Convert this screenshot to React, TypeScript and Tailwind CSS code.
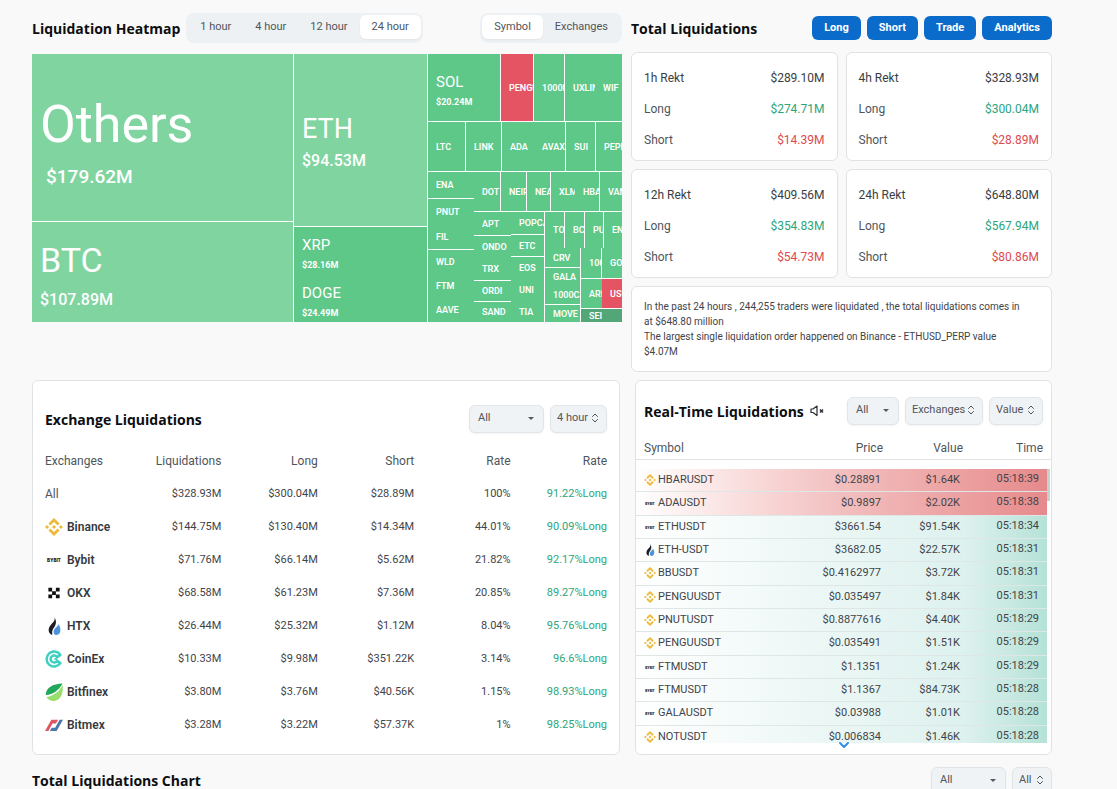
import React from "react";
import { ChevronDown, ChevronsUpDown } from "lucide-react";

type Tone = "light" | "green" | "red" | "dark";

interface Cell {
  size: number;
  label?: string;
  value?: string;
  tone?: Tone;
  text?: string;
  // no dividing line after this cell
  open?: boolean;
  dir?: "row" | "col";
  items?: Cell[];
}

const tones: Record<Tone, string> = {
  light: "bg-[#80d4a0]",
  green: "bg-[#5dc887]",
  red: "bg-[#e45463]",
  dark: "bg-[#53a678]",
};

const cell = (label: string, size: number, open = false, tone: Tone = "green"): Cell => ({
  label,
  size,
  open,
  tone,
});

const heatmap: Cell = {
  size: 1,
  dir: "row",
  items: [
    {
      size: 262,
      dir: "col",
      items: [
        { label: "Others", value: "$179.62M", size: 168, tone: "light", text: "others" },
        { label: "BTC", value: "$107.89M", size: 100, tone: "light", text: "btc" },
      ],
    },
    {
      size: 134,
      dir: "col",
      items: [
        { label: "ETH", value: "$94.53M", size: 173, tone: "light", text: "eth" },
        { label: "XRP", value: "$28.16M", size: 48, open: true, text: "mid" },
        { label: "DOGE", value: "$24.49M", size: 47, text: "mid" },
      ],
    },
    {
      size: 194,
      dir: "col",
      items: [
        {
          size: 68,
          dir: "row",
          items: [
            { label: "SOL", value: "$20.24M", size: 73, text: "mid" },
            cell("PENGU", 33, false, "red"),
            cell("1000PEPE", 31),
            cell("UXLINK", 30, true),
            cell("WIF", 27),
          ],
        },
        {
          size: 50,
          dir: "row",
          items: [
            cell("LTC", 38),
            cell("LINK", 36),
            cell("ADA", 32, true),
            cell("AVAX", 32),
            cell("SUI", 30),
            cell("PEPE", 26),
          ],
        },
        {
          size: 150,
          dir: "row",
          items: [
            {
              size: 46,
              dir: "col",
              open: true,
              items: [
                cell("ENA", 27),
                cell("PNUT", 26, true),
                cell("FIL", 26),
                cell("WLD", 24, true),
                cell("FTM", 24, true),
                cell("AAVE", 24),
              ],
            },
            {
              size: 148,
              dir: "col",
              items: [
                {
                  size: 40,
                  dir: "row",
                  items: [
                    cell("DOT", 27),
                    cell("NEIRO", 26),
                    cell("NEAR", 24),
                    cell("XLM", 24, true),
                    cell("HBAR", 25),
                    cell("VANA", 22),
                  ],
                },
                {
                  size: 110,
                  dir: "row",
                  items: [
                    {
                      size: 37,
                      dir: "col",
                      open: true,
                      items: [
                        cell("APT", 24),
                        cell("ONDO", 22, true),
                        cell("TRX", 23),
                        cell("ORDI", 21),
                        cell("SAND", 20),
                      ],
                    },
                    {
                      size: 34,
                      dir: "col",
                      items: [
                        cell("POPCAT", 23),
                        cell("ETC", 22),
                        cell("EOS", 22, true),
                        cell("UNI", 22, true),
                        cell("TIA", 21),
                      ],
                    },
                    {
                      size: 77,
                      dir: "col",
                      items: [
                        {
                          size: 36,
                          dir: "row",
                          open: true,
                          items: [
                            cell("TON", 20),
                            cell("BCH", 20),
                            cell("PUFF", 19),
                            cell("ENS", 18),
                          ],
                        },
                        {
                          size: 74,
                          dir: "row",
                          items: [
                            {
                              size: 36,
                              dir: "col",
                              items: [
                                cell("CRV", 20),
                                cell("GALA", 18, true),
                                cell("1000CAT", 19),
                                cell("MOVE", 17),
                              ],
                            },
                            {
                              size: 41,
                              dir: "col",
                              items: [
                                {
                                  size: 31,
                                  dir: "row",
                                  items: [cell("1000X", 21), cell("GOAT", 20)],
                                },
                                {
                                  size: 30,
                                  dir: "row",
                                  items: [
                                    cell("ARB", 21, true),
                                    cell("USUAL", 20, false, "red"),
                                  ],
                                },
                                cell("SEI", 13, false, "dark"),
                              ],
                            },
                          ],
                        },
                      ],
                    },
                  ],
                },
              ],
            },
          ],
        },
      ],
    },
  ],
};

const labelText: Record<string, string> = {
  others: "text-[52px] leading-[60px] pt-2",
  btc: "text-[34px] leading-[44px] pt-1",
  eth: "text-[27px] leading-[36px] pt-0.5",
  mid: "text-[15px] leading-[20px] pt-1",
  small: "text-[9px] leading-[12px] font-semibold",
};

const valueText: Record<string, string> = {
  others: "text-[19px] leading-[24px] font-medium mt-2.5 ml-1.5",
  btc: "text-[16px] leading-[20px] font-medium mt-2",
  eth: "text-[16px] leading-[20px] font-medium mt-1",
  mid: "text-[9px] leading-[12px] font-bold mt-1",
  small: "",
};

const TreeCell = ({ node, line = "" }: { node: Cell; line?: string }) => {
  // the dividing line takes one pixel of the cell's own share
  const style = { flexGrow: line ? node.size - 1 : node.size };
  if (node.items) {
    const isRow = node.dir === "row";
    return (
      <div
        style={style}
        className={`flex min-h-0 min-w-0 basis-0 ${isRow ? "flex-row" : "flex-col"} ${line}`}
      >
        {node.items.map((item, i) => {
          const last = i === node.items!.length - 1;
          const border = isRow ? "border-r border-white" : "border-b border-white";
          return <TreeCell key={i} node={item} line={last || item.open ? "" : border} />;
        })}
      </div>
    );
  }
  const text = node.text ?? "small";
  return (
    <div
      style={style}
      className={`flex min-h-0 min-w-0 basis-0 flex-col justify-center overflow-hidden whitespace-nowrap text-white ${tones[node.tone ?? "green"]} ${line}`}
    >
      <span className={`pl-2 ${labelText[text]}`}>{node.label}</span>
      {node.value && <span className={`pl-2 ${valueText[text]}`}>{node.value}</span>}
    </div>
  );
};

const BinanceLogo = ({ className }: { className: string }) => (
  <svg viewBox="0 0 24 24" className={className} fill="#ecbb3c" aria-hidden="true">
    <path d="M7.3 9.9 12 5.2l4.7 4.7 2.8-2.7L12 0 4.6 7.2zM0 12l2.7-2.7L5.5 12l-2.8 2.7zM7.3 14.1 12 18.8l4.7-4.7 2.8 2.7L12 24l-7.400-7.200zM18.500 12l2.800-2.700L24 12l-2.700 2.700zM14.800 12 12 9.200 9.200 12l2.800 2.800z" />
  </svg>
);

const BybitLogo = ({ className }: { className: string }) => (
  <svg viewBox="0 0 24 24" className={className} aria-hidden="true">
    <text x="12" y="15" textAnchor="middle" fontSize="6" fontWeight="900" fill="#26282c" fontFamily="Inter, sans-serif">
      BYBIT
    </text>
  </svg>
);

const OkxLogo = ({ className }: { className: string }) => (
  <svg viewBox="0 0 24 24" className={className} fill="#111" aria-hidden="true">
    <path d="M4.500 5h5v5h-5zM14.500 5h5v5h-5zM9.500 9.500h5v5h-5zM4.500 14h5v5h-5zM14.500 14h5v5h-5z" />
  </svg>
);

const HtxLogo = ({ className }: { className: string }) => (
  <svg viewBox="0 0 24 24" className={className} aria-hidden="true">
    <path d="M12.500 0c1.500 4-1 6.500-4 9.500C4.500 13.500 2.500 20.500 9.500 24c1-2-1-4 1-7.500 2-3.500 7-8 2-16.500z" fill="#1c2026" />
    <path d="M18 9.500c-.5 3-6.500 5.500-6.500 10 0 2.500 1.500 4.500 3.500 4.500 4 0 6-4 5.500-8-.3-2.500-1.300-5-2.500-6.500z" fill="#4b93dd" />
  </svg>
);

const CoinExLogo = ({ className }: { className: string }) => (
  <svg viewBox="0 0 24 24" className={className} fill="none" stroke="#3fd0c2" aria-hidden="true">
    <path
      d="M20.500 6.500A10 10 0 1 0 20.500 17.500L16 14.500A4.600 4.600 0 1 1 16 9.500Z"
      strokeWidth="3.400"
      strokeLinejoin="round"
    />
    <path d="M12.500 12h4" strokeWidth="2.400" />
  </svg>
);

const BitfinexLogo = ({ className }: { className: string }) => (
  <svg viewBox="0 0 24 24" className={className} aria-hidden="true">
    <path d="M1 16C1 6 10 1 23.500 0.500 18 10 11 15 1 16z" fill="#22a85a" />
    <path d="M2 18.500C12 17 19.500 10.500 23.500 2.500c1.500 13-4 21.500-12 21.500-4 0-7.500-2-9.500-5.500z" fill="#97de6c" />
  </svg>
);

const BitmexLogo = ({ className }: { className: string }) => (
  <svg viewBox="0 0 24 24" className={className} aria-hidden="true">
    <path d="M0 20 8.500 5h9l-3 5h-4.500L4.500 20z" fill="#e15561" />
    <path d="M24 5h-4.500l-6 10.500H9L6.500 20h9z" fill="#4a78ab" />
  </svg>
);

const MuteIcon = () => (
  <svg viewBox="0 0 14 12" className="h-3 w-3.5" fill="none" stroke="#2a2e33" aria-hidden="true">
    <path d="M1 4v3.500h2L7 10.500V1L3 4z" strokeWidth="1.200" strokeLinejoin="round" />
    <path d="M10 4.500l3 3M13 4.500l-3 3" strokeWidth="1.500" />
  </svg>
);

const logos = {
  Binance: BinanceLogo,
  Bybit: BybitLogo,
  OKX: OkxLogo,
  HTX: HtxLogo,
  CoinEx: CoinExLogo,
  Bitfinex: BitfinexLogo,
  Bitmex: BitmexLogo,
};

type Exchange = keyof typeof logos;

const exchanges = [
  ["All", "$328.93M", "$300.04M", "$28.89M", "100%", "91.22%Long"],
  ["Binance", "$144.75M", "$130.40M", "$14.34M", "44.01%", "90.09%Long"],
  ["Bybit", "$71.76M", "$66.14M", "$5.62M", "21.82%", "92.17%Long"],
  ["OKX", "$68.58M", "$61.23M", "$7.36M", "20.85%", "89.27%Long"],
  ["HTX", "$26.44M", "$25.32M", "$1.12M", "8.04%", "95.76%Long"],
  ["CoinEx", "$10.33M", "$9.98M", "$351.22K", "3.14%", "96.6%Long"],
  ["Bitfinex", "$3.80M", "$3.76M", "$40.56K", "1.15%", "98.93%Long"],
  ["Bitmex", "$3.28M", "$3.22M", "$57.37K", "1%", "98.25%Long"],
];

const orders: { ex: Exchange; symbol: string; price: string; value: string; time: string; short?: boolean }[] = [
  { ex: "Binance", symbol: "HBARUSDT", price: "$0.28891", value: "$1.64K", time: "05:18:39", short: true },
  { ex: "Bybit", symbol: "ADAUSDT", price: "$0.9897", value: "$2.02K", time: "05:18:38", short: true },
  { ex: "Bybit", symbol: "ETHUSDT", price: "$3661.54", value: "$91.54K", time: "05:18:34" },
  { ex: "HTX", symbol: "ETH-USDT", price: "$3682.05", value: "$22.57K", time: "05:18:31" },
  { ex: "Binance", symbol: "BBUSDT", price: "$0.4162977", value: "$3.72K", time: "05:18:31" },
  { ex: "Binance", symbol: "PENGUUSDT", price: "$0.035497", value: "$1.84K", time: "05:18:31" },
  { ex: "Binance", symbol: "PNUTUSDT", price: "$0.8877616", value: "$4.40K", time: "05:18:29" },
  { ex: "Binance", symbol: "PENGUUSDT", price: "$0.035491", value: "$1.51K", time: "05:18:29" },
  { ex: "Bybit", symbol: "FTMUSDT", price: "$1.1351", value: "$1.24K", time: "05:18:29" },
  { ex: "Bybit", symbol: "FTMUSDT", price: "$1.1367", value: "$84.73K", time: "05:18:28" },
  { ex: "Bybit", symbol: "GALAUSDT", price: "$0.03988", value: "$1.01K", time: "05:18:28" },
  { ex: "Binance", symbol: "NOTUSDT", price: "$0.006834", value: "$1.46K", time: "05:18:28" },
];

const rekt = [
  { title: "1h Rekt", total: "$289.10M", long: "$274.71M", short: "$14.39M" },
  { title: "4h Rekt", total: "$328.93M", long: "$300.04M", short: "$28.89M" },
  { title: "12h Rekt", total: "$409.56M", long: "$354.83M", short: "$54.73M" },
  { title: "24h Rekt", total: "$648.80M", long: "$567.94M", short: "$80.86M" },
];

const Title = ({ children }: { children: React.ReactNode }) => (
  <h2 className="pt-0.5 font-['Open_Sans',sans-serif] text-[14px] leading-5 font-bold whitespace-nowrap text-[#0c0e11]">
    {children}
  </h2>
);

const Tabs = ({ items, active }: { items: string[]; active: string }) => (
  <div className="flex rounded-lg bg-[#eef1f4] p-0.5 pb-1 text-[11px]">
    {items.map((item) => (
      <button
        key={item}
        type="button"
        className={`h-6 rounded-md px-3 whitespace-nowrap ${item === active ? "bg-white shadow-xs" : ""}`}
      >
        {item}
      </button>
    ))}
  </div>
);

const Picker = ({ label, value, width, caret }: { label: string; value: string; width: string; caret?: boolean }) => (
  <div className={`relative h-7 ${width}`}>
    <select
      aria-label={label}
      className={`h-full w-full appearance-none rounded-md border border-[#e0e5e9] bg-[#f0f3f5] pb-0.5 text-[11px] shadow-xs ${caret ? "pr-5 pl-2" : "pr-4 pl-1.5"}`}
    >
      <option>{value}</option>
    </select>
    {caret ? (
      <svg viewBox="0 0 8 4" className="pointer-events-none absolute top-3 right-2.5 h-[3px] w-1.5" fill="#555a60">
        <path d="M0 0h8L4 4z" />
      </svg>
    ) : (
      <ChevronsUpDown className="pointer-events-none absolute top-[7px] right-1.5 h-3 w-3" strokeWidth={2} />
    )}
  </div>
);

const App = () => {
  return (
    <div className="h-screen min-h-[789px] overflow-hidden bg-[#f9f9f9] pt-3 pr-[65px] pl-8 font-[Roboto,sans-serif] text-[12px] leading-4 text-[#50555b]">
      <div className="grid grid-cols-[590fr_421fr] gap-x-[9px]">
        <section>
          <div className="flex h-8 items-center justify-between">
            <div className="flex items-center gap-1.5">
              <Title>Liquidation Heatmap</Title>
              <Tabs items={["1 hour", "4 hour", "12 hour", "24 hour"]} active="24 hour" />
            </div>
            <Tabs items={["Symbol", "Exchanges"]} active="Symbol" />
          </div>
          <div className="mt-2.5 flex h-[268px]">
            <TreeCell node={heatmap} />
          </div>
        </section>

        <section>
          <div className="flex h-8 items-center justify-between">
            <Title>Total Liquidations</Title>
            <div className="flex gap-1.5">
              {["Long", "Short", "Trade", "Analytics"].map((name) => (
                <button
                  key={name}
                  type="button"
                  className="h-6 rounded-md bg-[#0b6bcb] px-3 text-[11px] font-bold text-white"
                >
                  {name}
                </button>
              ))}
            </div>
          </div>
          <div className="mt-2 grid grid-cols-2 gap-2">
            {rekt.map((r) => (
              <div
                key={r.title}
                className="flex h-[109px] flex-col justify-center gap-[15px] rounded-md border border-[#e0e3e6] bg-white px-3 pt-1"
              >
                <div className="flex justify-between text-[#3a3e43]">
                  <span>{r.title}</span>
                  <span>{r.total}</span>
                </div>
                <div className="flex justify-between">
                  <span>Long</span>
                  <span className="text-[#2ca57c]">{r.long}</span>
                </div>
                <div className="flex justify-between">
                  <span>Short</span>
                  <span className="text-[#dd4a50]">{r.short}</span>
                </div>
              </div>
            ))}
          </div>
          <div className="mt-2 rounded-md border border-[#e0e3e6] bg-white py-3 pr-7 pl-3 text-[10px] leading-[15px] text-[#3f4449]">
            <p>
              In the past 24 hours , 244,255 traders were liquidated , the total liquidations comes in at $648.80
              million
            </p>
            <p>The largest single liquidation order happened on Binance - ETHUSD_PERP value $4.07M</p>
          </div>
        </section>
      </div>

      <div className="mt-2 grid grid-cols-[588fr_417fr] gap-x-[15px]">
        <section className="h-[375px] rounded-md border border-[#e0e3e6] bg-white px-3 pt-6">
          <div className="flex h-7 items-center justify-between">
            <Title>Exchange Liquidations</Title>
            <div className="flex gap-1.5">
              <Picker label="Coin" value="All" width="w-[75px]" caret />
              <Picker label="Period" value="4 hour" width="w-[57px]" />
            </div>
          </div>
          <table className="mt-[11px] w-full table-fixed">
            <thead>
              <tr className="h-[33px]">
                <th className="w-20 text-left font-normal">Exchanges</th>
                {["Liquidations", "Long", "Short", "Rate", "Rate"].map((h, i) => (
                  <th key={i} className="text-right font-normal">
                    {h}
                  </th>
                ))}
              </tr>
            </thead>
            <tbody>
              {exchanges.map(([name, ...values]) => {
                const Logo = logos[name as Exchange];
                return (
                  <tr key={name} className="h-[33px]">
                    <td>
                      {Logo ? (
                        <a href="#" className="flex items-center gap-1 font-semibold text-[#35393e]">
                          <Logo className="h-[18px] w-[18px]" />
                          {name}
                        </a>
                      ) : (
                        name
                      )}
                    </td>
                    {values.map((v, i) => (
                      <td
                        key={i}
                        className={`text-right text-[11px] whitespace-nowrap ${i === 4 ? "text-[#2ca57c]" : "text-[#3f4449]"}`}
                      >
                        {v}
                      </td>
                    ))}
                  </tr>
                );
              })}
            </tbody>
          </table>
        </section>

        <section className="h-[375px] rounded-md border border-[#e0e3e6] bg-white pt-4">
          <div className="flex h-7 items-center justify-between px-2">
            <div className="flex items-center gap-1.5">
              <Title>Real-Time Liquidations</Title>
              <button type="button" aria-label="Unmute">
                <MuteIcon />
              </button>
            </div>
            <div className="flex gap-1.5">
              <Picker label="Symbol" value="All" width="w-[52px]" caret />
              <Picker label="Exchange" value="Exchanges" width="w-[78px]" />
              <Picker label="Value" value="Value" width="w-[54px]" />
            </div>
          </div>
          <div className="mt-3.5 grid grid-cols-[1fr_100px_80px_80px] border-b border-[#e0e3e6] px-2 pb-0.5 text-right leading-[18px]">
            <span className="text-left">Symbol</span>
            <span>Price</span>
            <span>Value</span>
            <span>Time</span>
          </div>
          <div className="mt-[9px] flex h-[274px] overflow-hidden">
            <table className="h-[280px] w-full shrink table-fixed self-start text-[11px] text-[#3f4449]">
              <tbody>
                {orders.map((o, i) => {
                  const Logo = logos[o.ex];
                  return (
                    <tr
                      key={i}
                      className={`border-b border-[#dfe6e6] ${
                        o.short
                          ? "bg-linear-to-r from-white via-[#f2bfbf] to-[#e68a8c]"
                          : "bg-linear-to-r from-white via-[#ddf1ee] via-80% to-[#b5e2d6]"
                      }`}
                    >
                      <td className="pl-2">
                        <div className="flex items-center gap-0.5">
                          <Logo className="h-3 w-3" />
                          {o.symbol}
                        </div>
                      </td>
                      <td className="w-[100px] text-right">{o.price}</td>
                      <td className="w-[79px] text-right">{o.value}</td>
                      <td className="w-[87px] pt-0.5 pr-2 text-right align-top">{o.time}</td>
                    </tr>
                  );
                })}
              </tbody>
            </table>
            <div className="w-1 shrink-0">
              <div className="h-8 w-[3px] bg-[#c5d0d0]" />
            </div>
          </div>
          <button type="button" aria-label="Show more" className="mx-auto -mt-1.5 block">
            <ChevronDown className="h-4 w-4 text-[#2f8fe8]" strokeWidth={3} />
          </button>
        </section>
      </div>

      <div className="mt-3 flex items-start justify-between">
        <div className="pt-0.5">
          <Title>Total Liquidations Chart</Title>
        </div>
        <div className="flex gap-1.5">
          <Picker label="Chart coin" value="All" width="w-[75px]" caret />
          <Picker label="Chart exchange" value="All" width="w-[40px]" />
        </div>
      </div>
    </div>
  );
};

export default App;
